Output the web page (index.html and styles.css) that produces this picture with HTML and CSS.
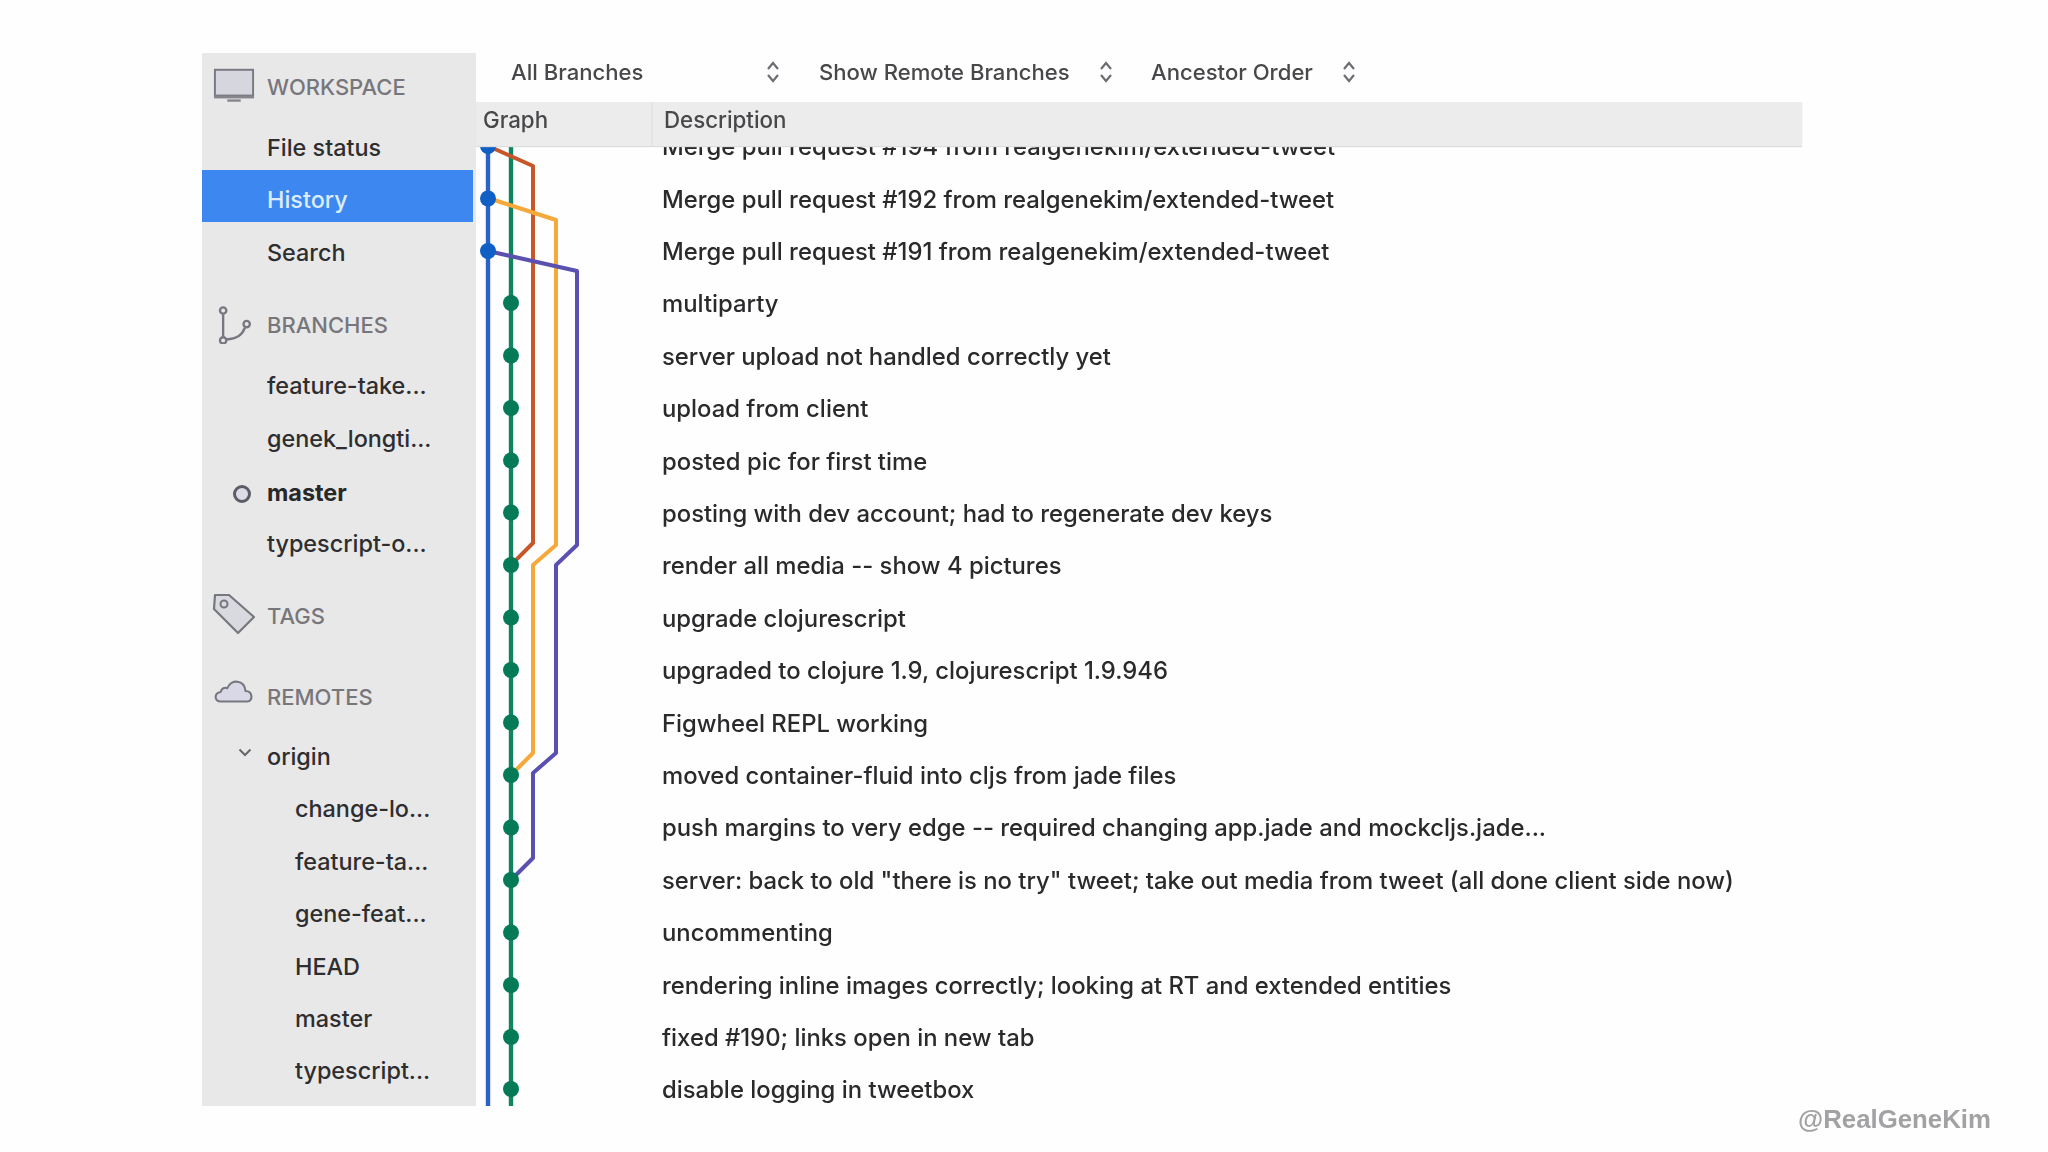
FILE: index.html
```html
<!DOCTYPE html>
<html lang="en">
<head>
<meta charset="utf-8">
<title>Commit history</title>
<link rel="stylesheet" href="styles.css">
</head>
<body>
<div class="shell">
  <aside class="sidebar">
    <div class="head head-workspace">
      <svg class="icon" viewBox="0 0 44 38"><rect x="2" y="2" width="40" height="27" fill="#d6d6de" stroke="#77777f" stroke-width="2"/><rect x="1" y="29" width="42" height="3" fill="#85858c"/><rect x="15" y="33" width="14" height="2.5" fill="#85858c"/></svg>
      <span>WORKSPACE</span>
    </div>
    <div class="item">File status</div>
    <div class="item selected">History</div>
    <div class="item">Search</div>
    <div class="head head-branches">
      <svg class="icon" viewBox="0 0 44 42"><g fill="none" stroke="#77777f" stroke-width="2.600"><circle cx="10" cy="5" r="3.500"/><circle cx="10" cy="38" r="3.500"/><circle cx="36" cy="20" r="3.500"/><path d="M10 9V34M13 37C26 36 31 32 34 24"/></g></svg>
      <span>BRANCHES</span>
    </div>
    <div class="item">feature-take...</div>
    <div class="item">genek_longti...</div>
    <div class="item current"><i class="dot"></i>master</div>
    <div class="item">typescript-o...</div>
    <div class="head head-tags">
      <svg class="icon" viewBox="0 0 44 42"><path d="M3 2H17L42 24L26 40L2 16Z" fill="#d8dadf" stroke="#77777f" stroke-width="2.200" stroke-linejoin="round"/><circle cx="12" cy="11" r="3.500" fill="none" stroke="#77777f" stroke-width="2"/></svg>
      <span>TAGS</span>
    </div>
    <div class="head head-remotes">
      <svg class="icon" viewBox="0 0 44 30"><path d="M8 26C1 26 1 17 8 16C9 12 12 11 15 12C19 2 33 3 34 15C42 15 42 26 36 26Z" fill="#d9d8e6" stroke="#77777f" stroke-width="2.200" stroke-linejoin="round"/></svg>
      <span>REMOTES</span>
    </div>
    <div class="item origin"><svg class="chev" viewBox="0 0 14 9"><path d="M1.500 1.500L7 7L12.500 1.500" fill="none" stroke="#66666c" stroke-width="2"/></svg>origin</div>
    <div class="item nested">change-lo...</div>
    <div class="item nested">feature-ta...</div>
    <div class="item nested">gene-feat...</div>
    <div class="item nested">HEAD</div>
    <div class="item nested">master</div>
    <div class="item nested">typescript...</div>
  </aside>
  <main class="main">
    <div class="toolbar">
      <div class="select select-branches"><span>All Branches</span><svg class="updown" viewBox="0 0 14 24"><path d="M2 9L7 3L12 9M2 15L7 21L12 15" fill="none" stroke="#6c6c72" stroke-width="2.200"/></svg></div>
      <div class="select select-remote"><span>Show Remote Branches</span><svg class="updown" viewBox="0 0 14 24"><path d="M2 9L7 3L12 9M2 15L7 21L12 15" fill="none" stroke="#6c6c72" stroke-width="2.200"/></svg></div>
      <div class="select select-order"><span>Ancestor Order</span><svg class="updown" viewBox="0 0 14 24"><path d="M2 9L7 3L12 9M2 15L7 21L12 15" fill="none" stroke="#6c6c72" stroke-width="2.200"/></svg></div>
    </div>
    <div class="columns">
      <div class="col-graph">Graph</div>
      <div class="col-desc">Description</div>
    </div>
    <div class="list">
      <svg class="graph" viewBox="476 146 170 960">
        <g fill="none" stroke-width="4" stroke-linejoin="round">
          <path d="M511 146V1106" stroke="#0f8460" stroke-width="4.400"/>
          <path d="M488 146L533 166V543L511 565" stroke="#c8562b"/>
          <path d="M488 198L556 220V545L533 565V753L511 775" stroke="#f5a93a"/>
          <path d="M488 251L577 271V545L556 565V753L533 773V858L511 880" stroke="#5a50b0"/>
          <path d="M488 146V1106" stroke="#2b62c8" stroke-width="4.400"/>
        </g>
        <g fill="#0f5fc4">
          <circle cx="488" cy="146" r="8"/><circle cx="488" cy="198.500" r="8"/><circle cx="488" cy="251" r="8"/>
        </g>
        <g fill="#057a57">
          <circle cx="511" cy="303" r="8"/><circle cx="511" cy="355.500" r="8"/><circle cx="511" cy="408" r="8"/><circle cx="511" cy="460.500" r="8"/><circle cx="511" cy="512.500" r="8"/><circle cx="511" cy="565" r="8"/><circle cx="511" cy="617.500" r="8"/><circle cx="511" cy="670" r="8"/><circle cx="511" cy="722.500" r="8"/><circle cx="511" cy="775" r="8"/><circle cx="511" cy="827.500" r="8"/><circle cx="511" cy="880" r="8"/><circle cx="511" cy="932.500" r="8"/><circle cx="511" cy="985" r="8"/><circle cx="511" cy="1037" r="8"/><circle cx="511" cy="1089" r="8"/>
        </g>
      </svg>
      <div class="row">Merge pull request #194 from realgenekim/extended-tweet</div>
      <div class="row">Merge pull request #192 from realgenekim/extended-tweet</div>
      <div class="row">Merge pull request #191 from realgenekim/extended-tweet</div>
      <div class="row">multiparty</div>
      <div class="row">server upload not handled correctly yet</div>
      <div class="row">upload from client</div>
      <div class="row">posted pic for first time</div>
      <div class="row">posting with dev account; had to regenerate dev keys</div>
      <div class="row">render all media -- show 4 pictures</div>
      <div class="row">upgrade clojurescript</div>
      <div class="row">upgraded to clojure 1.9, clojurescript 1.9.946</div>
      <div class="row">Figwheel REPL working</div>
      <div class="row">moved container-fluid into cljs from jade files</div>
      <div class="row">push margins to very edge -- required changing app.jade and mockcljs.jade...</div>
      <div class="row">server: back to old "there is no try" tweet; take out media from tweet (all done client side now)</div>
      <div class="row">uncommenting</div>
      <div class="row">rendering inline images correctly; looking at RT and extended entities</div>
      <div class="row">fixed #190; links open in new tab</div>
      <div class="row">disable logging in tweetbox</div>
    </div>
  </main>
</div>
<div class="credit">@RealGeneKim</div>
</body>
</html>
```
FILE: styles.css
```css
* { box-sizing: border-box; }
html, body { margin: 0; height: 1152px; overflow: hidden; }
body {
  background: #fefefe;
  color: #2e2e30;
  font-family: Inter, "Liberation Sans", sans-serif;
  font-size: 23.850px;
  font-weight: 450;
  padding: 53px 0 0 202px;
  position: relative;
}
.shell {
  display: flex;
  width: 1600px;
  height: 1053px;
  filter: blur(0.7px);
}
.sidebar {
  width: 274px;
  flex: none;
  background: #e9e8e9;
  overflow: hidden;
  padding-top: 11px;
  font-size: 23.400px;
}
.head {
  display: flex;
  align-items: center;
  height: 46px;
  margin-bottom: 11.300px;
  color: #77777b;
  font-size: 22px;
  font-weight: 550;
  padding-left: 65px;
  position: relative;
}
.icon { position: absolute; left: 11px; width: 42px; height: 38px; }
.head-workspace .icon { top: 2px; height: 40px; }
.head-branches { margin-top: 24px; }
.head-tags { margin-top: 23.400px; margin-bottom: 0; }
.head-tags .icon { top: -1px; left: 10px; height: 44px; width: 44px; }
.head-remotes { margin-top: 35px; margin-bottom: 11px; }
.head-remotes .icon { top: 2px; height: 30px; }
.item {
  display: flex;
  align-items: center;
  height: 52.400px;
  padding-left: 65px;
  color: #2e2e30;
}
.selected {
  background: #3d88f0;
  color: #dcecff;
  margin: -4px 3px 4px 0;
  padding-top: 8px;
}
.current {
  font-weight: 700;
  color: #28282a;
  position: relative;
  padding-top: 4px;
}
.dot {
  position: absolute;
  left: 31px;
  top: 20px;
  width: 18px;
  height: 18px;
  border-radius: 50%;
  border: 3.500px solid #5c5c68;
  background: #dcdce6;
}
.origin { position: relative; height: 52px; }
.chev { position: absolute; left: 36px; top: 17px; width: 14px; height: 9px; }
.nested { padding-left: 93px; }
.main { flex: 1; min-width: 0; display: flex; flex-direction: column; }
.toolbar {
  height: 49px;
  flex: none;
  display: flex;
  align-items: center;
  padding: 0 0 12px 35px;
  font-size: 22.100px;
  color: #48484b;
}
.select { display: flex; align-items: center; justify-content: space-between; }
.select-branches { width: 269px; margin-right: 39px; }
.select-remote { width: 294px; margin-right: 38px; }
.select-order { width: 205px; }
.updown { width: 14px; height: 24px; }
.columns {
  height: 44px;
  flex: none;
  display: flex;
  background: #ececec;
  color: #48484b;
  font-size: 22.300px;
  box-shadow: 0 1px 1px #dcdcdc;
  position: relative;
  z-index: 1;
}
.col-graph { width: 177px; padding: 4px 0 0 7px; border-right: 2px solid #e4e4e4; }
.col-desc { padding: 4px 0 0 11px; }
.list { flex: 1; position: relative; overflow: hidden; }
.graph { position: absolute; left: 0; top: 0; width: 170px; height: 960px; }
.row {
  height: 52.400px;
  display: flex;
  align-items: center;
  padding-left: 186px;
  white-space: nowrap;
  color: #2a2a2c;
}
.row:first-of-type { margin-top: -25.400px; }
.credit {
  position: absolute;
  left: 1798px;
  top: 1105px;
  font-family: "Liberation Sans", sans-serif;
  font-weight: 700;
  font-size: 25.800px;
  color: #a2a2a4;
}
```
